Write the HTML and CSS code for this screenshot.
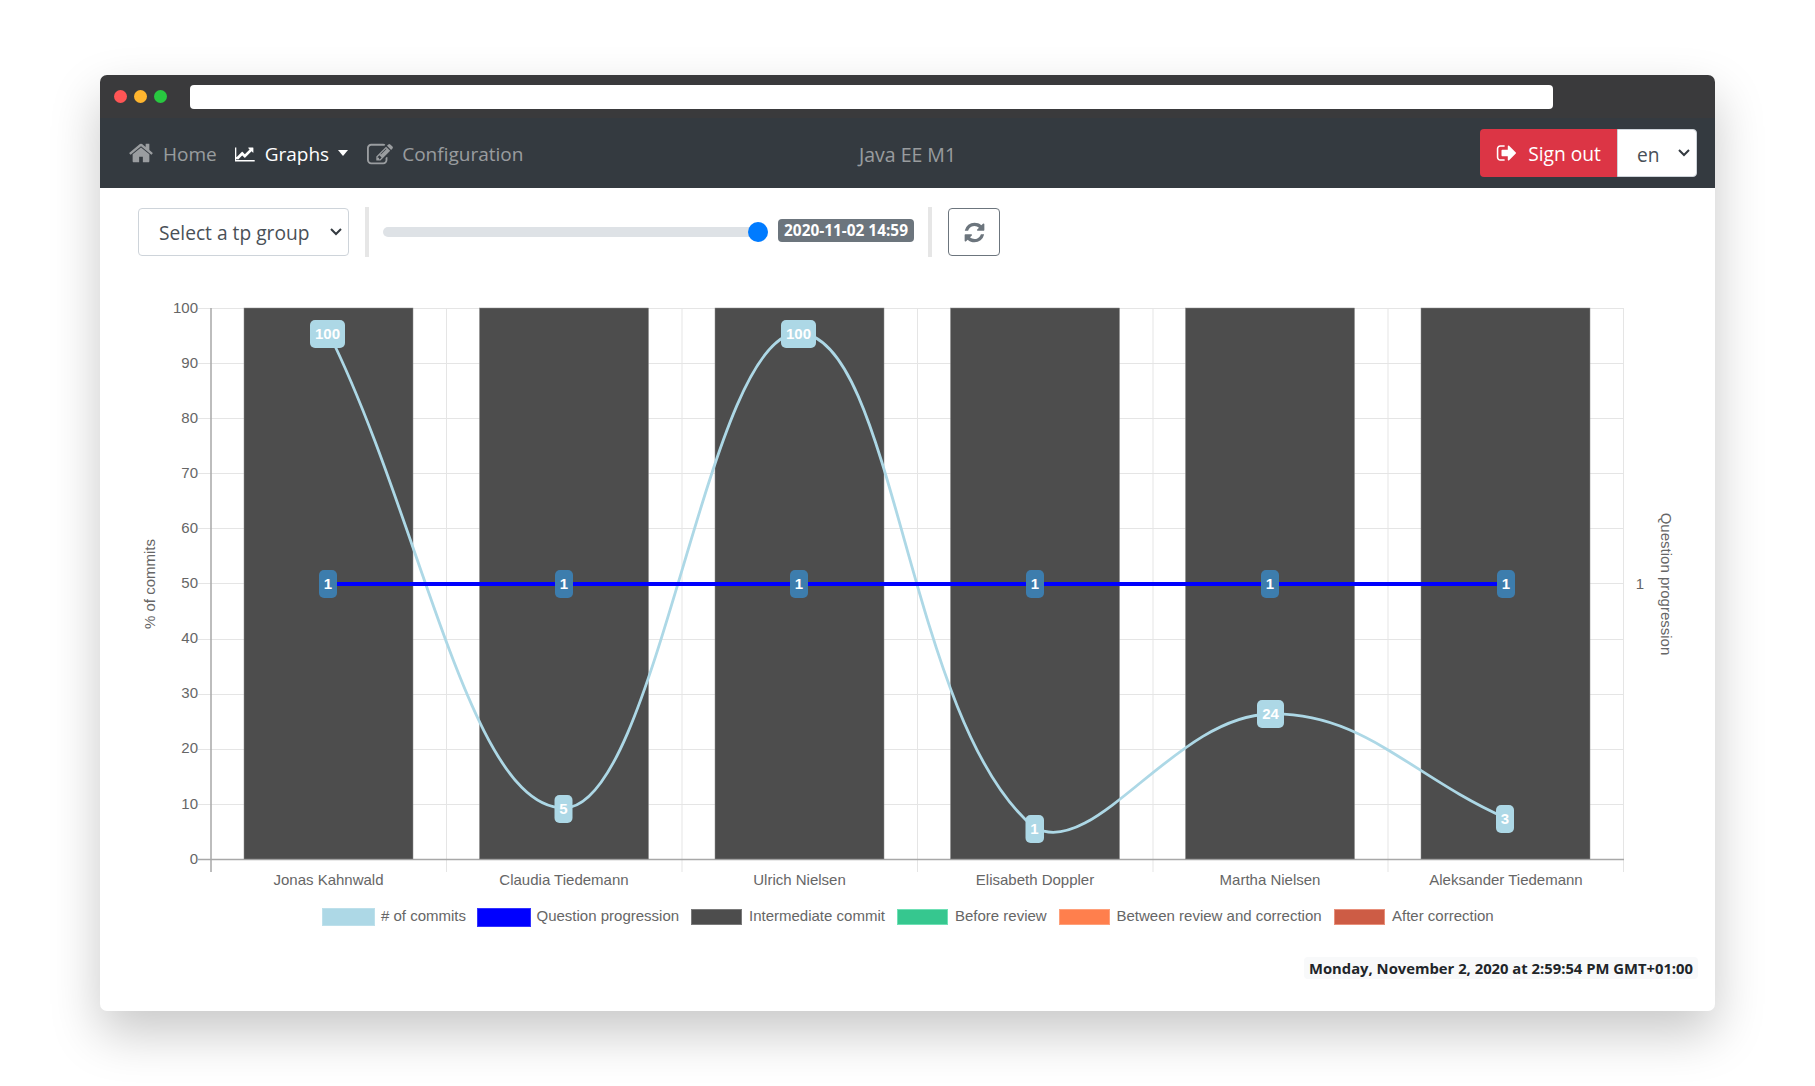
FILE: index.html
```html
<!DOCTYPE html>
<html>
<head>
  <title>Java EE M1</title>
  <link rel="stylesheet" href="styles.css">
</head>
<body>
  <div class="window">
    <div class="titlebar">
      <span class="dot dot-red"></span>
      <span class="dot dot-yellow"></span>
      <span class="dot dot-green"></span>
      <div class="address"></div>
    </div>

    <nav class="navbar">
      <div class="nav-links">
        <a class="nav-link" href="#">
          <svg class="icon icon-home" viewBox="0 0 1792 1792"><path d="M1472 992v480q0 26-19 45t-45 19h-384v-384h-256v384h-384q-26 0-45-19t-19-45v-480q0-1 .5-3t.5-3l575-474 575 474q1 2 1 6zm223-69l-62 74q-8 9-21 11h-3q-13 0-21-7l-692-577-692 577q-12 8-24 7-13-2-21-11l-62-74q-8-10-7-23.5t11-21.5l719-599q32-26 76-26t76 26l244 204v-195q0-14 9-23t23-9h192q14 0 23 9t9 23v408l219 182q10 8 11 21.5t-7 23.5z"/></svg>
          <span class="nav-text">Home</span>
        </a>
        <a class="nav-link active" href="#">
          <svg class="icon icon-chart" viewBox="0 0 2048 1792"><path d="M1920 1536v128h-1920v-1344h128v1216h1792zm-128-1184v435q0 21-19.5 29.5t-35.5-7.5l-121-121-633 633q-10 10-23 10t-23-10l-233-233-416 416-192-192 585-585q10-10 23-10t23 10l233 233 464-464-121-121q-16-16-7.5-35.5t29.5-19.5h435q14 0 23 9t9 23z"/></svg>
          <span class="nav-text">Graphs</span>
          <span class="caret"></span>
        </a>
        <a class="nav-link" href="#">
          <svg class="icon icon-edit" viewBox="0 0 1792 1792"><path d="M888 1184l116-116-152-152-116 116v56h96v96h56zm440-720q-16-16-33 1l-350 350q-17 17-1 33t33-1l350-350q17-17 1-33zm80 594v190q0 119-84.5 203.5t-203.5 84.5h-832q-119 0-203.5-84.5t-84.5-203.5v-832q0-119 84.5-203.5t203.5-84.5h832q63 0 117 25 15 7 18 23 3 17-9 29l-49 49q-14 14-32 8-23-6-45-6h-832q-66 0-113 47t-47 113v832q0 66 47 113t113 47h832q66 0 113-47t47-113v-126q0-13 9-22l64-64q15-15 35-7t20 29zm-96-738l288 288-672 672h-288v-288zm444 132l-92 92-288-288 92-92q28-28 68-28t68 28l152 152q28 28 28 68t-28 68z"/></svg>
          <span class="nav-text">Configuration</span>
        </a>
      </div>
      <div class="nav-title">Java EE M1</div>
      <div class="nav-actions">
        <button class="btn-signout">
          <svg class="icon icon-signout" viewBox="0 0 1792 1792"><path d="M704 1440q0 4 1 20t.5 26.5-3 23.5-10 19.5-20.5 6.5h-320q-119 0-203.5-84.5t-84.5-203.5v-704q0-119 84.5-203.5t203.5-84.5h320q13 0 22.5 9.5t9.5 22.5q0 4 1 20t.5 26.5-3 23.5-10 19.5-20.5 6.5h-320q-66 0-113 47t-47 113v704q0 66 47 113t113 47h312l11.5 1 11.5 3 8 5.5 7 9 2 13.5zm928-544q0 26-19 45l-544 544q-19 19-45 19t-45-19-19-45v-288h-448q-26 0-45-19t-19-45v-384q0-26 19-45t45-19h448v-288q0-26 19-45t45-19 45 19l544 544q19 19 19 45z"/></svg>
          <span>Sign out</span>
        </button>
        <select class="select select-lang"><option>en</option></select>
      </div>
    </nav>

    <div class="toolbar">
      <select class="select select-group"><option>Select a tp group</option></select>
      <div class="separator"></div>
      <input class="slider" type="range" min="0" max="100" value="100">
      <span class="badge">2020-11-02 14:59</span>
      <div class="separator separator-right"></div>
      <button class="btn-refresh">
        <svg class="icon icon-refresh" viewBox="0 0 1792 1792"><path d="M1639 1056q0 5-1 7-64 268-268 434.5t-478 166.5q-146 0-282.5-55t-243.5-157l-129 129q-19 19-45 19t-45-19-19-45v-448q0-26 19-45t45-19h448q26 0 45 19t19 45-19 45l-137 137q71 66 161 102t187 36q134 0 250-65t186-179q11-17 53-117 8-23 30-23h192q13 0 22.5 9.5t9.5 22.5zm25-800v448q0 26-19 45t-45 19h-448q-26 0-45-19t-19-45 19-45l138-138q-148-137-349-137-134 0-250 65t-186 179q-11 17-53 117-8 23-30 23h-199q-13 0-22.5-9.5t-9.5-22.5v-7q65-268 270-434.5t480-166.5q146 0 284 55.5t245 156.5l130-129q19-19 45-19t45 19 19 45z"/></svg>
      </button>
    </div>

    <svg class="chart" viewBox="100 276 1615 670" width="1615" height="670">
      <!-- grid -->
      <g class="grid">
        <path d="M198 308.5H1623M198 363.5H1623M198 418.5H1623M198 473.5H1623M198 528.5H1623M198 583.5H1623M198 639.5H1623M198 694.5H1623M198 749.5H1623M198 804.5H1623"/>
        <path d="M446.5 308V872M682 308V872M917.5 308V872M1153 308V872M1388 308V872M1623.5 308V872"/>
      </g>
      <path class="axis" d="M211 308V872M198 859.5H1624"/>

      <!-- bars -->
      <g class="bars">
        <rect x="244" y="308" width="169" height="551"/>
        <rect x="479.500" y="308" width="169" height="551"/>
        <rect x="715" y="308" width="169" height="551"/>
        <rect x="950.500" y="308" width="169" height="551"/>
        <rect x="1185.500" y="308" width="169" height="551"/>
        <rect x="1421" y="308" width="169" height="551"/>
      </g>

      <!-- lines -->
      <path class="line-commits" d="M328.700 333C422.800 523 469.800 808 564 808C658.200 808 706.900 329.100 799.500 333C895.300 337.100 907.500 724.800 1035 828C1095.700 859 1175.200 716 1270 714C1363.500 712 1411.400 776.400 1505.700 818"/>
      <path class="line-progress" d="M328.700 584H1505.700"/>

      <!-- point labels -->
      <g class="point-label">
        <rect x="310" y="320" width="35" height="28" rx="5"/><text x="327.500" y="338.500">100</text>
        <rect x="554.500" y="795" width="18" height="28" rx="5"/><text x="563.500" y="813.500">5</text>
        <rect x="781" y="320" width="35" height="28" rx="5"/><text x="798.500" y="338.500">100</text>
        <rect x="1025.500" y="815" width="18.500" height="28" rx="5"/><text x="1034.500" y="833.500">1</text>
        <rect x="1257" y="700" width="27" height="28" rx="5"/><text x="1270.500" y="718.500">24</text>
        <rect x="1496" y="805" width="18" height="28" rx="5"/><text x="1505" y="823.500">3</text>
      </g>
      <g class="point-label point-label-blue">
        <rect x="319" y="570" width="18" height="28" rx="5"/><text x="328" y="588.500">1</text>
        <rect x="555" y="570" width="18" height="28" rx="5"/><text x="564" y="588.500">1</text>
        <rect x="790" y="570" width="18" height="28" rx="5"/><text x="799" y="588.500">1</text>
        <rect x="1026" y="570" width="18" height="28" rx="5"/><text x="1035" y="588.500">1</text>
        <rect x="1261" y="570" width="18" height="28" rx="5"/><text x="1270" y="588.500">1</text>
        <rect x="1497" y="570" width="18" height="28" rx="5"/><text x="1506" y="588.500">1</text>
      </g>

      <!-- axis labels -->
      <g class="tick tick-y">
        <text x="198" y="313">100</text>
        <text x="198" y="368">90</text>
        <text x="198" y="423">80</text>
        <text x="198" y="478">70</text>
        <text x="198" y="533">60</text>
        <text x="198" y="588">50</text>
        <text x="198" y="643">40</text>
        <text x="198" y="698">30</text>
        <text x="198" y="753">20</text>
        <text x="198" y="809">10</text>
        <text x="198" y="864">0</text>
      </g>
      <g class="tick tick-x">
        <text x="328.500" y="885">Jonas Kahnwald</text>
        <text x="564" y="885">Claudia Tiedemann</text>
        <text x="799.500" y="885">Ulrich Nielsen</text>
        <text x="1035" y="885">Elisabeth Doppler</text>
        <text x="1270" y="885">Martha Nielsen</text>
        <text x="1506" y="885">Aleksander Tiedemann</text>
      </g>
      <text class="tick" x="1640" y="588.500" text-anchor="middle">1</text>
      <text class="tick axis-title" transform="translate(155 584) rotate(-90)">% of commits</text>
      <text class="tick axis-title" transform="translate(1661 584) rotate(90)">Question progression</text>

      <!-- legend -->
      <g class="legend">
        <rect x="322.500" y="908.500" width="52" height="17" fill="#add8e6" stroke="#bde0eb"/>
        <text x="381" y="921"># of commits</text>
        <rect x="477.500" y="908.500" width="53" height="18" fill="#0000ff" stroke="#3333ff"/>
        <text x="536.500" y="921">Question progression</text>
        <rect x="691.500" y="909.500" width="50" height="15" fill="#4d4d4d" stroke="#7a7a7a"/>
        <text x="749" y="921">Intermediate commit</text>
        <rect x="897.500" y="909.500" width="50" height="15" fill="#36c78f" stroke="#6fe0b5"/>
        <text x="955" y="921">Before review</text>
        <rect x="1059.500" y="909.500" width="50" height="15" fill="#ff7f4d" stroke="#ffa07a"/>
        <text x="1116.500" y="921">Between review and correction</text>
        <rect x="1334.500" y="909.500" width="50" height="15" fill="#cd5c45" stroke="#e88f7a"/>
        <text x="1392" y="921">After correction</text>
      </g>
    </svg>

    <div class="footer">
      <span class="timestamp">Monday, November 2, 2020 at 2:59:54 PM GMT+01:00</span>
    </div>
  </div>
</body>
</html>
```

FILE: styles.css
```css
html, body {
  margin: 0;
  padding: 0;
}

body {
  min-height: 1086px;
  padding-top: 75px;
  box-sizing: border-box;
  background-color: #fff;
  font-family: "Open Sans", "Noto Sans", sans-serif;
  color: #495057;
  overflow: hidden;
}

.window {
  width: 1615px;
  height: 936px;
  margin-left: 100px;
  background-color: #fff;
  border-radius: 7px;
  box-shadow: 0 22px 50px rgba(0, 0, 0, 0.22);
  display: flex;
  flex-direction: column;
}

.titlebar {
  height: 43px;
  padding: 10px 0 0 13.5px;
  box-sizing: border-box;
  background-color: #3a3a3c;
  border-radius: 7px 7px 0 0;
  display: flex;
  gap: 7px;
}

.dot {
  width: 13px;
  height: 13px;
  margin-top: 5px;
  border-radius: 50%;
}
.dot-red { background-color: #ff5555; }
.dot-yellow { background-color: #ffb52e; }
.dot-green { background-color: #28c840; }

.address {
  width: 1363px;
  height: 24px;
  margin-left: 16.5px;
  background-color: #fff;
  border-radius: 4px;
}

.navbar {
  height: 70px;
  box-sizing: border-box;
  padding: 11px 18px 11px 28px;
  background-color: #343a40;
  display: flex;
  align-items: center;
  position: relative;
}

.nav-links {
  display: flex;
  align-items: center;
  gap: 19px;
}

.nav-link {
  display: flex;
  align-items: center;
  gap: 9px;
  font-size: 19px;
  color: rgba(255, 255, 255, 0.5);
  text-decoration: none;
  white-space: nowrap;
}
.nav-link.active {
  color: #fff;
}

.nav-text {
  padding-top: 2px;
}

.icon {
  fill: currentColor;
  display: block;
  flex: none;
}
.icon-home { width: 26px; height: 26px; }
.icon-chart { width: 21px; height: 19px; margin-left: -1px; }
.icon-edit { width: 26px; height: 26px; margin-top: 3px; }
.icon-signout { width: 22px; height: 22px; }
.icon-refresh { width: 23px; height: 23px; }

.caret {
  width: 0;
  height: 0;
  border-top: 6px solid #fff;
  border-left: 5px solid transparent;
  border-right: 5px solid transparent;
}

.nav-title {
  position: absolute;
  left: 0;
  right: 0;
  padding-top: 2px;
  text-align: center;
  font-size: 19.5px;
  color: rgba(255, 255, 255, 0.5);
  pointer-events: none;
}

.nav-actions {
  margin-left: auto;
  display: flex;
}

.btn-signout {
  width: 137px;
  height: 48px;
  border: none;
  border-radius: 4px 0 0 4px;
  background-color: #dc3545;
  color: #fff;
  font-family: inherit;
  font-size: 19.2px;
  display: flex;
  align-items: center;
  justify-content: center;
  gap: 10px;
}

.select {
  -webkit-appearance: none;
  appearance: none;
  height: 48px;
  box-sizing: border-box;
  border: 1px solid #ced4da;
  background-color: #fff;
  background-image: url("data:image/svg+xml,%3Csvg xmlns='http://www.w3.org/2000/svg' width='14' height='10'%3E%3Cpath d='M2 2l5 5 5-5' fill='none' stroke='%23343a40' stroke-width='2'/%3E%3C/svg%3E");
  background-repeat: no-repeat;
  background-position: right 5px center;
  color: #495057;
  font-family: inherit;
  font-size: 19.2px;
  border-radius: 4px;
}

.select-lang {
  width: 80px;
  padding-top: 2px;
  padding-left: 19px;
  border-radius: 0 4px 4px 0;
}

.select-group {
  width: 211px;
  padding-left: 20px;
}

.toolbar {
  height: 88px;
  box-sizing: border-box;
  padding: 20px 0 20px 38px;
  display: flex;
  align-items: center;
}

.separator {
  width: 4px;
  height: 50px;
  margin-left: 16px;
  background-color: #e6e6e6;
}
.separator-right {
  margin-left: 14px;
}

.slider {
  -webkit-appearance: none;
  appearance: none;
  width: 385px;
  height: 20px;
  margin: 0 0 0 14px;
  padding: 0;
  background: transparent;
}
.slider::-webkit-slider-runnable-track {
  height: 10px;
  background-color: #dee2e6;
  border-radius: 5px;
}
.slider::-webkit-slider-thumb {
  -webkit-appearance: none;
  width: 20px;
  height: 20px;
  margin-top: -5px;
  border-radius: 50%;
  background-color: #007bff;
}

.badge {
  width: 136px;
  height: 23px;
  margin: 0 0 3px 10px;
  border-radius: 4px;
  background-color: #6c757d;
  color: #fff;
  font-size: 15.4px;
  font-weight: 700;
  line-height: 23px;
  text-align: center;
  white-space: nowrap;
}

.btn-refresh {
  width: 52px;
  height: 48px;
  margin-left: 16px;
  padding: 0;
  background-color: #fff;
  border: 1px solid #6c757d;
  border-radius: 4px;
  color: #6c757d;
  display: flex;
  align-items: center;
  justify-content: center;
}

.chart {
  display: block;
  flex: none;
}

.grid path {
  fill: none;
  stroke: #e5e5e5;
  stroke-width: 1;
}

.axis {
  fill: none;
  stroke: #a8a8a8;
  stroke-width: 1.5;
}

.bars rect {
  fill: #4d4d4d;
  stroke: #8c8c8c;
  stroke-width: 0.5;
}

.line-commits {
  fill: none;
  stroke: #add8e6;
  stroke-width: 2.8;
}

.line-progress {
  fill: none;
  stroke: #0000ff;
  stroke-width: 4;
}

.point-label rect {
  fill: #add8e6;
}
.point-label text {
  fill: #fff;
  font-family: "Liberation Sans", Arial, sans-serif;
  font-size: 15px;
  font-weight: 700;
  text-anchor: middle;
}
.point-label-blue rect {
  fill: #3d7dad;
}

.tick,
.legend text {
  fill: #666;
  font-family: "Liberation Sans", Arial, sans-serif;
  font-size: 15px;
}
.tick-y text {
  text-anchor: end;
}
.tick-x text {
  text-anchor: middle;
}
.axis-title {
  text-anchor: middle;
}

.footer {
  margin-top: 11px;
  padding-right: 17px;
  display: flex;
  justify-content: flex-end;
}

.timestamp {
  height: 22px;
  padding: 0 5px;
  background-color: #f8f9fa;
  border-radius: 4px;
  color: #212529;
  font-size: 14.8px;
  font-weight: 700;
  line-height: 23px;
  white-space: nowrap;
}
```
